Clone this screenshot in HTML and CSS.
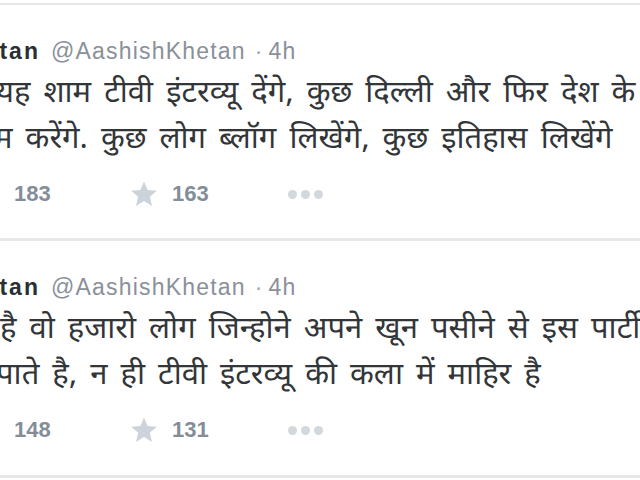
FILE: index.html
```html
<!DOCTYPE html>
<html lang="hi">
<head>
<meta charset="utf-8">
<link rel="stylesheet" href="styles.css">
</head>
<body>
<div class="stream">
  <div class="tweet">
    <div class="header"><span class="name">Khetan</span><span class="handle">@AashishKhetan</span><span class="dot">·</span><span class="time">4h</span></div>
    <div class="text">
      <div class="line l1">यह शाम टीवी इंटरव्यू देंगे, कुछ दिल्ली और फिर देश के</div>
      <div class="line l2">म करेंगे. कुछ लोग ब्लॉग लिखेंगे, कुछ इतिहास लिखेंगे</div>
    </div>
    <div class="actions">
      <span class="count rt">183</span>
      <svg class="star" viewBox="0 0 24 24"><path d="M12 1.2l3.1 7.4 7.9.6-6 5.2 1.9 7.8L12 18l-6.9 4.2L7 14.4 1 9.2l7.9-.6z"/></svg>
      <span class="count fav">163</span>
      <span class="more"><i></i><i></i><i></i></span>
    </div>
  </div>
  <div class="tweet">
    <div class="header"><span class="name">Khetan</span><span class="handle">@AashishKhetan</span><span class="dot">·</span><span class="time">4h</span></div>
    <div class="text">
      <div class="line l3">है वो हजारो लोग जिन्होने अपने खून पसीने से इस पार्टी को</div>
      <div class="line l4">पाते है, न ही टीवी इंटरव्यू की कला में माहिर है</div>
    </div>
    <div class="actions">
      <span class="count rt">148</span>
      <svg class="star" viewBox="0 0 24 24"><path d="M12 1.2l3.1 7.4 7.9.6-6 5.2 1.9 7.8L12 18l-6.9 4.2L7 14.4 1 9.2l7.9-.6z"/></svg>
      <span class="count fav">131</span>
      <span class="more"><i></i><i></i><i></i></span>
    </div>
  </div>
</div>
</body>
</html>
```
FILE: styles.css
```css
html, body {
  margin: 0;
  padding: 0;
  background: #ffffff;
  overflow: hidden;
}
body {
  width: 640px;
  height: 480px;
  font-family: "Liberation Sans", Arial, sans-serif;
}
.stream {
  padding-top: 3px;
  overflow: hidden;
}
.tweet {
  border-top: 2px solid #e6e8ea;
  height: 233px;
  overflow: hidden;
}
.tweet + .tweet {
  border-top: 3px solid #e6e8ea;
  height: 234px;
}
.tweet:last-child {
  border-bottom: 3px solid #e6e8ea;
}
.header {
  margin-top: 32px;
  height: 28px;
  line-height: 28px;
  font-size: 23px;
  white-space: nowrap;
  margin-left: -50px;
  display: flex;
}
.name {
  font-weight: bold;
  color: #292f33;
  letter-spacing: 2px;
  margin-right: 11px;
}
.handle {
  color: #8a9099;
  letter-spacing: 1.2px;
}
.dot {
  color: #a0a6ad;
  margin: 0 6px 0 9px;
}
.time {
  color: #8a9099;
  letter-spacing: 1.2px;
}
.text {
  color: #333639;
  font-family: "Noto Sans Devanagari", "Lohit Devanagari", "Noto Sans", "FreeSans", sans-serif;
  font-size: 31px;
  word-spacing: 5px;
  line-height: 46px;
  margin-top: 7px;
  white-space: nowrap;
}
.line.l1 { margin-left: -4px; }
.line.l2 { margin-left: -6px; }
.line.l3 { margin-left: 0; }
.line.l4 { margin-left: -4px; }
.actions {
  display: flex;
  align-items: center;
  height: 40px;
  margin-top: 10px;
}
.count {
  font-weight: bold;
  font-size: 22px;
  color: #838d98;
}
.rt {
  margin-left: 14px;
  width: 116px;
}
.star {
  width: 28px;
  height: 28px;
  fill: #ccd3da;
  margin-right: 14px;
}
.fav {
  width: 116px;
}
.more {
  display: flex;
  gap: 4px;
}
.more i {
  width: 9px;
  height: 9px;
  border-radius: 50%;
  background: #d3d8dd;
}
```
